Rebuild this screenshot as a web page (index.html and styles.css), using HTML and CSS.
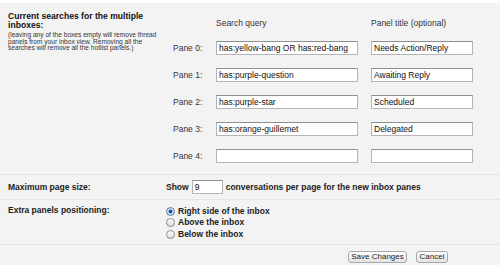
FILE: index.html
```html
<!DOCTYPE html>
<html lang="en">
<head>
  <meta charset="UTF-8" />
  <title>Multiple inboxes settings</title>
  <link rel="stylesheet" href="styles.css">
</head>
<body>
  <div class="topbar"></div>

  <form class="settings">
    <div class="row row-searches">
      <div class="row-label">
        <div class="label-title">Current searches for the multiple inboxes:</div>
        <div class="label-note">(leaving any of the boxes empty will remove thread panels from your inbox view. Removing all the searches will remove all the hotlist panels.)</div>
      </div>
      <div class="row-body">
        <div class="pane-grid">
          <span></span>
          <span class="col-head">Search query</span>
          <span class="col-head">Panel title (optional)</span>

          <label class="pane-label">Pane 0:</label>
          <input class="text-input query" type="text" value="has:yellow-bang OR has:red-bang">
          <input class="text-input title" type="text" value="Needs Action/Reply">

          <label class="pane-label">Pane 1:</label>
          <input class="text-input query" type="text" value="has:purple-question">
          <input class="text-input title" type="text" value="Awaiting Reply">

          <label class="pane-label">Pane 2:</label>
          <input class="text-input query" type="text" value="has:purple-star">
          <input class="text-input title" type="text" value="Scheduled">

          <label class="pane-label">Pane 3:</label>
          <input class="text-input query" type="text" value="has:orange-guillemet">
          <input class="text-input title" type="text" value="Delegated">

          <label class="pane-label">Pane 4:</label>
          <input class="text-input query" type="text" value="">
          <input class="text-input title" type="text" value="">
        </div>
      </div>
    </div>

    <div class="row row-pagesize">
      <div class="row-label bold">Maximum page size:</div>
      <div class="row-body inline bold">
        Show <input class="text-input size" type="text" value="9"> conversations per page for the new inbox panes
      </div>
    </div>

    <div class="row row-position">
      <div class="row-label bold">Extra panels positioning:</div>
      <div class="row-body options">
        <label class="option"><input type="radio" name="pos" checked> Right side of the inbox</label>
        <label class="option"><input type="radio" name="pos"> Above the inbox</label>
        <label class="option"><input type="radio" name="pos"> Below the inbox</label>
      </div>
    </div>

    <div class="actions">
      <button type="button" class="btn btn-save">Save Changes</button>
      <button type="button" class="btn btn-cancel">Cancel</button>
    </div>
  </form>
</body>
</html>
```

FILE: styles.css
```css
* {
  margin: 0;
  padding: 0;
  box-sizing: border-box;
}

body {
  background: #f3f3f3;
  font-family: 'Liberation Sans', Arial, sans-serif;
  font-size: 8.5px;
  color: #222;
  overflow: hidden;
}

.topbar {
  height: 3px;
  background: #fff;
}

.row {
  display: flex;
  border-bottom: 1px solid #e4e4e4;
}

.row-label {
  width: 166px;
  padding-left: 8px;
  flex-shrink: 0;
}

.row-body {
  flex: 1;
}

.bold {
  font-weight: 700;
}

/* searches */
.row-searches {
  padding: 9px 0 11px 0;
}

.label-title {
  font-size: 8.6px;
  font-weight: 700;
  line-height: 9px;
  width: 150px;
  color: #111;
}

.label-note {
  font-size: 6.6px;
  line-height: 6.7px;
  margin-top: 2px;
  width: 150px;
  color: #333;
}

.pane-grid {
  display: grid;
  grid-template-columns: 30px 142px 102px;
  grid-template-rows: 10px repeat(5, 14px);
  column-gap: 13px;
  row-gap: 13px;
  padding-left: 7px;
  margin-top: 6px;
  align-items: center;
}

.col-head {
  color: #333;
  line-height: 10px;
}

.pane-label {
  color: #333;
  white-space: nowrap;
}

.text-input {
  height: 14px;
  border: 1px solid #b5b5b5;
  border-top-color: #8f8f8f;
  background: #fff;
  font-family: 'Liberation Sans', Arial, sans-serif;
  font-size: 8.5px;
  color: #111;
  padding: 0 2px;
  outline: none;
}

.query {
  width: 142px;
}

.title {
  width: 102px;
}

/* page size */
.row-pagesize {
  padding: 5px 0;
  align-items: center;
}

.inline {
  display: flex;
  align-items: center;
  gap: 3px;
  white-space: nowrap;
}

.size {
  width: 31px;
  font-weight: 400;
}

/* positioning */
.row-position {
  padding: 5px 0 4.5px 0;
}

.row-position .row-label {
  line-height: 11.5px;
}

.option {
  display: flex;
  align-items: center;
  gap: 3px;
  height: 11.5px;
  font-weight: 700;
}

.option input {
  appearance: none;
  width: 9px;
  height: 9px;
  border-radius: 50%;
  border: 1px solid #8a8a8a;
  background: linear-gradient(#ffffff, #dcdcdc);
  margin-top: 1px;
}

.option input:checked {
  border-color: #5b7fae;
  background: radial-gradient(circle, #1f4f9a 0, #1f4f9a 1.6px, #bcd3f0 2.2px, #eaf2fc 100%);
}

/* buttons */
.actions {
  display: flex;
  justify-content: flex-end;
  gap: 9px;
  padding: 6px 52px 0 0;
}

.btn {
  height: 12px;
  padding: 0;
  border: 1px solid #a8a8a8;
  border-radius: 3px;
  background: linear-gradient(#ffffff, #e3e3e3);
  font-family: 'Liberation Sans', Arial, sans-serif;
  font-size: 8px;
  line-height: 10px;
  color: #222;
  text-align: center;
}

.btn-save {
  width: 59px;
}

.btn-cancel {
  width: 32px;
}
```
